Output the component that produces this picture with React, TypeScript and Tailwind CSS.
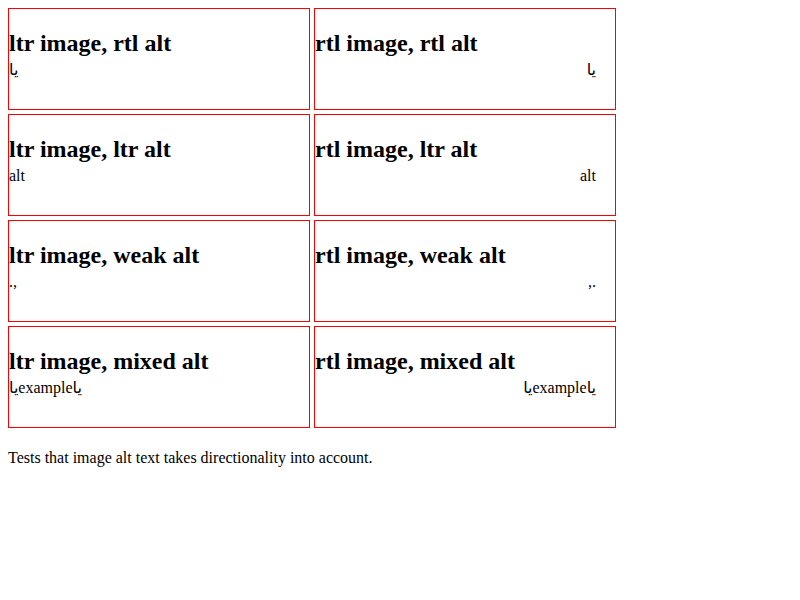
import React from "react";

const serif = { fontFamily: '"Liberation Serif", "DejaVu Sans", serif' };

function Box({ title, alt, rtl }: { title: string; alt: string; rtl: boolean }) {
  return (
    <div className="w-[302px] h-[102px] border border-[#ff0000] box-border">
      <div className="pt-[20px] text-[24px] font-bold leading-[28px] text-black">{title}</div>
      {rtl ? (
        <div dir="rtl" className="mt-[4px] text-[16px] leading-[18px] text-black pr-[19px]">
          {alt}
        </div>
      ) : (
        <div dir="ltr" className="mt-[4px] text-[16px] leading-[18px] text-black">
          {alt}
        </div>
      )}
    </div>
  );
}

export default function App() {
  const rows: [string, string, string, string][] = [
    ["ltr image, rtl alt", "rtl image, rtl alt", "يا", "يا"],
    ["ltr image, ltr alt", "rtl image, ltr alt", "alt", "alt"],
    ["ltr image, weak alt", "rtl image, weak alt", ".,", ".,"],
    ["ltr image, mixed alt", "rtl image, mixed alt", "ياexampleيا", "ياexampleيا"],
  ];
  return (
    <div className="p-2 bg-white min-h-[600px]" style={serif}>
      <div className="grid grid-cols-[302px_302px] gap-1">
        {rows.map((r, i) => (
          <React.Fragment key={i}>
            <Box title={r[0]} alt={r[2]} rtl={false} />
            <Box title={r[1]} alt={r[3]} rtl={true} />
          </React.Fragment>
        ))}
      </div>
      <p className="mt-[21px] text-[16px] leading-[18px] text-black">
        Tests that image alt text takes directionality into account.
      </p>
    </div>
  );
}
